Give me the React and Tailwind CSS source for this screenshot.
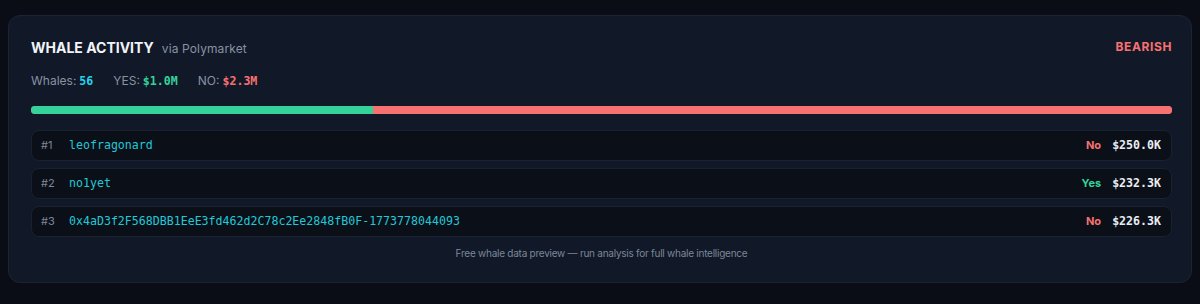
import React from "react";

const sans = { fontFamily: "Inter, 'Noto Sans', sans-serif" };
const rows = [
  { n: 1, name: "leofragonard", side: "No", amt: "$250.0K" },
  { n: 2, name: "no1yet", side: "Yes", amt: "$232.3K" },
  { n: 3, name: "0x4aD3f2F568DBB1EeE3fd462d2C78c2Ee2848fB0F-1773778044093", side: "No", amt: "$226.3K" },
];

export default function App() {
  return (
    <div className="w-[1200px] h-[304px] bg-[#0a0d15] pt-[15px] pl-2 pr-[8px] font-['Inter',sans-serif]" style={sans}>
      <div className="rounded-xl border border-[#1c2433] bg-[#111827] pl-[22px] pr-[19px] pt-[21px] pb-[21px] flex flex-col">
        <div className="flex items-center justify-between h-5">
          <div className="flex items-baseline gap-[8px]">
            <span className="text-[14px] font-bold text-[#f1f5f9]">WHALE ACTIVITY</span>
            <span className="text-[12px] text-[#8792a5] tracking-[0.01em]">via Polymarket</span>
          </div>
          <span className="text-[12px] font-bold tracking-wider text-[#f87171]">BEARISH</span>
        </div>
        <div className="mt-[14px] flex items-center h-5 gap-[20px] text-[12px] text-[#8792a5]">
          <span>Whales:<span className="ml-[3px] font-['DejaVu_Sans_Mono',monospace] font-bold text-[11.6px] text-[#22d3ee]">56</span></span>
          <span>YES:<span className="ml-[3px] font-['DejaVu_Sans_Mono',monospace] font-bold text-[11.6px] text-[#34d399]">$1.0M</span></span>
          <span>NO:<span className="ml-[3px] font-['DejaVu_Sans_Mono',monospace] font-bold text-[11.6px] text-[#f87171]">$2.3M</span></span>
        </div>
        <div className="mt-[15px] h-2 rounded-full overflow-hidden flex bg-[#f87171]">
          <div className="h-full bg-[#34d399]" style={{ width: "30%" }} />
          <div className="h-full flex-1 bg-[#f87171]" />
        </div>
        <div className="mt-4 flex flex-col gap-[7px]">
          {rows.map((r) => (
            <div key={r.n} className="h-[31px] rounded-lg border border-[#1a2130] bg-[#0b0f17] flex items-center pl-[9px] pr-[10px]">
              <span className="w-[28px] text-[11px] text-[#7c8799]">#{r.n}</span>
              <span className="font-['DejaVu_Sans_Mono',monospace] text-[11.6px] text-[#22c8d8]">{r.name}</span>
              <span className={"ml-auto text-[11px] font-bold " + (r.side === "No" ? "text-[#f87171]" : "text-[#34d399]")}>{r.side}</span>
              <span className="ml-[11px] font-['DejaVu_Sans_Mono',monospace] font-bold text-[11.6px] text-[#e8edf4]">{r.amt}</span>
            </div>
          ))}
        </div>
        <div className="mt-[8px] text-center text-[10px] leading-4 tracking-tight text-[#7c8799]">
          Free whale data preview — run analysis for full whale intelligence
        </div>
      </div>
    </div>
  );
}
